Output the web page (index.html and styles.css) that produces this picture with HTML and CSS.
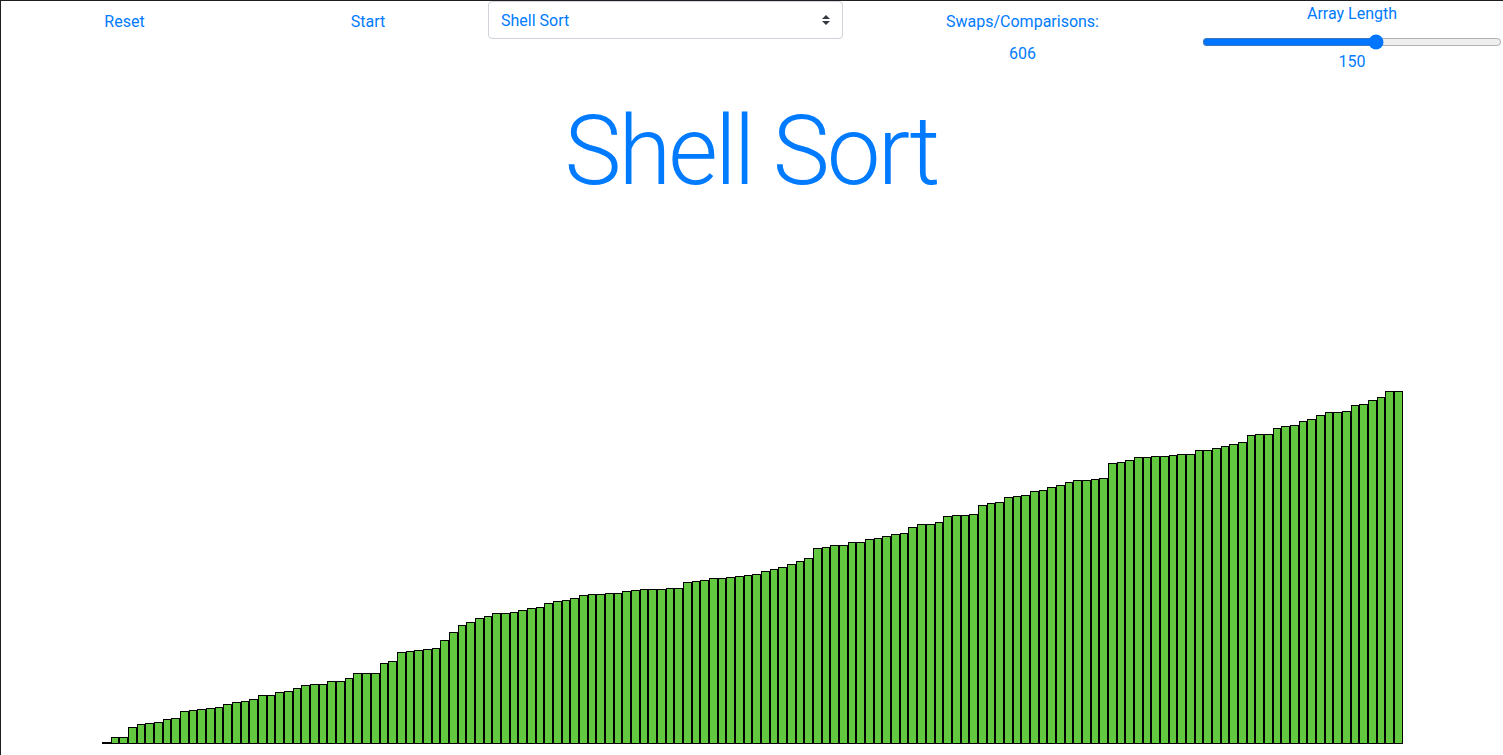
FILE: index.html
```html
<!DOCTYPE html>
<html lang="en">
<head>
<meta charset="utf-8">
<title>Sorting Visualizer</title>
<link rel="stylesheet" href="styles.css">
</head>
<body>
<div class="window">
  <header class="toolbar">
    <div class="cell"><button class="link-btn" type="button">Reset</button></div>
    <div class="cell"><button class="link-btn" type="button">Start</button></div>
    <div class="cell select-cell">
      <div class="select-wrap">
        <select class="algo-select">
          <option>Bubble Sort</option>
          <option>Selection Sort</option>
          <option>Insertion Sort</option>
          <option>Merge Sort</option>
          <option>Quick Sort</option>
          <option>Heap Sort</option>
          <option selected>Shell Sort</option>
        </select>
        <svg class="select-arrow" width="8" height="10" viewBox="0 0 4 5"><path fill="#343a40" d="M2 0L0 2h4zm0 5L0 3h4z"/></svg>
      </div>
    </div>
    <div class="cell stats">
      <span class="stat-label">Swaps/Comparisons:</span>
      <span class="stat-value">606</span>
    </div>
    <div class="cell slider-cell">
      <label class="slider-label" for="len">Array Length</label>
      <input class="slider" id="len" type="range" min="10" max="250" value="150">
      <span class="slider-value">150</span>
    </div>
  </header>
  <h1 class="title">Shell Sort</h1>
  <div class="chart">
    <div class="bar" style="height:2px"></div>
    <div class="bar" style="height:7px"></div>
    <div class="bar" style="height:7px"></div>
    <div class="bar" style="height:17px"></div>
    <div class="bar" style="height:20px"></div>
    <div class="bar" style="height:21px"></div>
    <div class="bar" style="height:22px"></div>
    <div class="bar" style="height:25px"></div>
    <div class="bar" style="height:26px"></div>
    <div class="bar" style="height:33px"></div>
    <div class="bar" style="height:34px"></div>
    <div class="bar" style="height:35px"></div>
    <div class="bar" style="height:36px"></div>
    <div class="bar" style="height:37px"></div>
    <div class="bar" style="height:40px"></div>
    <div class="bar" style="height:42px"></div>
    <div class="bar" style="height:43px"></div>
    <div class="bar" style="height:45px"></div>
    <div class="bar" style="height:49px"></div>
    <div class="bar" style="height:49px"></div>
    <div class="bar" style="height:52px"></div>
    <div class="bar" style="height:53px"></div>
    <div class="bar" style="height:56px"></div>
    <div class="bar" style="height:59px"></div>
    <div class="bar" style="height:60px"></div>
    <div class="bar" style="height:60px"></div>
    <div class="bar" style="height:63px"></div>
    <div class="bar" style="height:63px"></div>
    <div class="bar" style="height:66px"></div>
    <div class="bar" style="height:71px"></div>
    <div class="bar" style="height:71px"></div>
    <div class="bar" style="height:71px"></div>
    <div class="bar" style="height:81px"></div>
    <div class="bar" style="height:83px"></div>
    <div class="bar" style="height:92px"></div>
    <div class="bar" style="height:93px"></div>
    <div class="bar" style="height:94px"></div>
    <div class="bar" style="height:95px"></div>
    <div class="bar" style="height:96px"></div>
    <div class="bar" style="height:104px"></div>
    <div class="bar" style="height:112px"></div>
    <div class="bar" style="height:119px"></div>
    <div class="bar" style="height:122px"></div>
    <div class="bar" style="height:126px"></div>
    <div class="bar" style="height:128px"></div>
    <div class="bar" style="height:131px"></div>
    <div class="bar" style="height:131px"></div>
    <div class="bar" style="height:132px"></div>
    <div class="bar" style="height:134px"></div>
    <div class="bar" style="height:136px"></div>
    <div class="bar" style="height:137px"></div>
    <div class="bar" style="height:141px"></div>
    <div class="bar" style="height:143px"></div>
    <div class="bar" style="height:144px"></div>
    <div class="bar" style="height:146px"></div>
    <div class="bar" style="height:149px"></div>
    <div class="bar" style="height:150px"></div>
    <div class="bar" style="height:150px"></div>
    <div class="bar" style="height:151px"></div>
    <div class="bar" style="height:151px"></div>
    <div class="bar" style="height:153px"></div>
    <div class="bar" style="height:154px"></div>
    <div class="bar" style="height:155px"></div>
    <div class="bar" style="height:155px"></div>
    <div class="bar" style="height:155px"></div>
    <div class="bar" style="height:156px"></div>
    <div class="bar" style="height:156px"></div>
    <div class="bar" style="height:162px"></div>
    <div class="bar" style="height:163px"></div>
    <div class="bar" style="height:164px"></div>
    <div class="bar" style="height:166px"></div>
    <div class="bar" style="height:166px"></div>
    <div class="bar" style="height:167px"></div>
    <div class="bar" style="height:168px"></div>
    <div class="bar" style="height:169px"></div>
    <div class="bar" style="height:170px"></div>
    <div class="bar" style="height:173px"></div>
    <div class="bar" style="height:175px"></div>
    <div class="bar" style="height:177px"></div>
    <div class="bar" style="height:180px"></div>
    <div class="bar" style="height:183px"></div>
    <div class="bar" style="height:186px"></div>
    <div class="bar" style="height:196px"></div>
    <div class="bar" style="height:197px"></div>
    <div class="bar" style="height:199px"></div>
    <div class="bar" style="height:199px"></div>
    <div class="bar" style="height:202px"></div>
    <div class="bar" style="height:202px"></div>
    <div class="bar" style="height:205px"></div>
    <div class="bar" style="height:206px"></div>
    <div class="bar" style="height:208px"></div>
    <div class="bar" style="height:210px"></div>
    <div class="bar" style="height:211px"></div>
    <div class="bar" style="height:217px"></div>
    <div class="bar" style="height:220px"></div>
    <div class="bar" style="height:220px"></div>
    <div class="bar" style="height:222px"></div>
    <div class="bar" style="height:228px"></div>
    <div class="bar" style="height:229px"></div>
    <div class="bar" style="height:229px"></div>
    <div class="bar" style="height:230px"></div>
    <div class="bar" style="height:239px"></div>
    <div class="bar" style="height:241px"></div>
    <div class="bar" style="height:242px"></div>
    <div class="bar" style="height:247px"></div>
    <div class="bar" style="height:248px"></div>
    <div class="bar" style="height:249px"></div>
    <div class="bar" style="height:253px"></div>
    <div class="bar" style="height:254px"></div>
    <div class="bar" style="height:257px"></div>
    <div class="bar" style="height:259px"></div>
    <div class="bar" style="height:262px"></div>
    <div class="bar" style="height:264px"></div>
    <div class="bar" style="height:264px"></div>
    <div class="bar" style="height:265px"></div>
    <div class="bar" style="height:266px"></div>
    <div class="bar" style="height:281px"></div>
    <div class="bar" style="height:282px"></div>
    <div class="bar" style="height:284px"></div>
    <div class="bar" style="height:287px"></div>
    <div class="bar" style="height:287px"></div>
    <div class="bar" style="height:288px"></div>
    <div class="bar" style="height:288px"></div>
    <div class="bar" style="height:289px"></div>
    <div class="bar" style="height:290px"></div>
    <div class="bar" style="height:290px"></div>
    <div class="bar" style="height:294px"></div>
    <div class="bar" style="height:294px"></div>
    <div class="bar" style="height:296px"></div>
    <div class="bar" style="height:298px"></div>
    <div class="bar" style="height:300px"></div>
    <div class="bar" style="height:302px"></div>
    <div class="bar" style="height:309px"></div>
    <div class="bar" style="height:310px"></div>
    <div class="bar" style="height:310px"></div>
    <div class="bar" style="height:316px"></div>
    <div class="bar" style="height:318px"></div>
    <div class="bar" style="height:319px"></div>
    <div class="bar" style="height:323px"></div>
    <div class="bar" style="height:325px"></div>
    <div class="bar" style="height:329px"></div>
    <div class="bar" style="height:332px"></div>
    <div class="bar" style="height:332px"></div>
    <div class="bar" style="height:333px"></div>
    <div class="bar" style="height:339px"></div>
    <div class="bar" style="height:340px"></div>
    <div class="bar" style="height:344px"></div>
    <div class="bar" style="height:347px"></div>
    <div class="bar" style="height:353px"></div>
    <div class="bar" style="height:353px"></div>
  </div>
</div>
</body>
</html>
```
FILE: styles.css
```css
html, body {
  margin: 0;
  padding: 0;
  background: #fff;
}

body {
  font-family: Roboto, "Liberation Sans", Arial, sans-serif;
  font-size: 16px;
  line-height: 24px;
  color: #007bff;
  overflow: hidden;
}

.window {
  box-sizing: border-box;
  height: 755px;
  border-top: 1px solid #1f1f1f;
  border-left: 1px solid #1f1f1f;
}

.toolbar {
  display: grid;
  grid-template-columns: 247px 240px 355px 359px 300px;
  align-items: start;
}

.cell {
  display: flex;
  flex-direction: column;
  align-items: center;
}

.link-btn {
  margin-top: 2px;
  padding: 6px 12px;
  border: 1px solid transparent;
  background: transparent;
  font: inherit;
  line-height: 24px;
  color: #007bff;
  cursor: pointer;
}

.select-cell {
  align-items: stretch;
}

.select-wrap {
  position: relative;
}

.algo-select {
  display: block;
  box-sizing: border-box;
  width: 355px;
  height: 38px;
  margin: 0;
  padding: 7px 28px 5px 12px;
  border: 1px solid #ced4da;
  border-radius: 4px;
  background: #fff;
  font: inherit;
  line-height: 24px;
  color: #007bff;
  appearance: none;
  -webkit-appearance: none;
}

.select-arrow {
  position: absolute;
  right: 13px;
  top: 14px;
  pointer-events: none;
}

.stats {
  padding-top: 9px;
}

.stat-value {
  margin-top: 8px;
}

.slider-cell {
  padding-top: 1px;
}

.slider {
  width: 300px;
  height: 16px;
  margin: 8px 0 0;
  padding: 0;
}

.title {
  margin: 20px 0 0;
  font-family: Roboto, "Liberation Sans", Arial, sans-serif;
  font-weight: 300;
  font-size: 96px;
  line-height: 1.2;
  letter-spacing: -2.9px;
  text-indent: -2px;
  text-align: center;
  color: #007bff;
}

.chart {
  display: flex;
  align-items: flex-end;
  width: 1301px;
  height: 535px;
  margin: 0 auto;
  padding-left: 1px;
  box-sizing: content-box;
}

.bar {
  flex: 1 1 0;
  box-sizing: border-box;
  border: 1px solid #000;
  background: #62c840;
}
```
